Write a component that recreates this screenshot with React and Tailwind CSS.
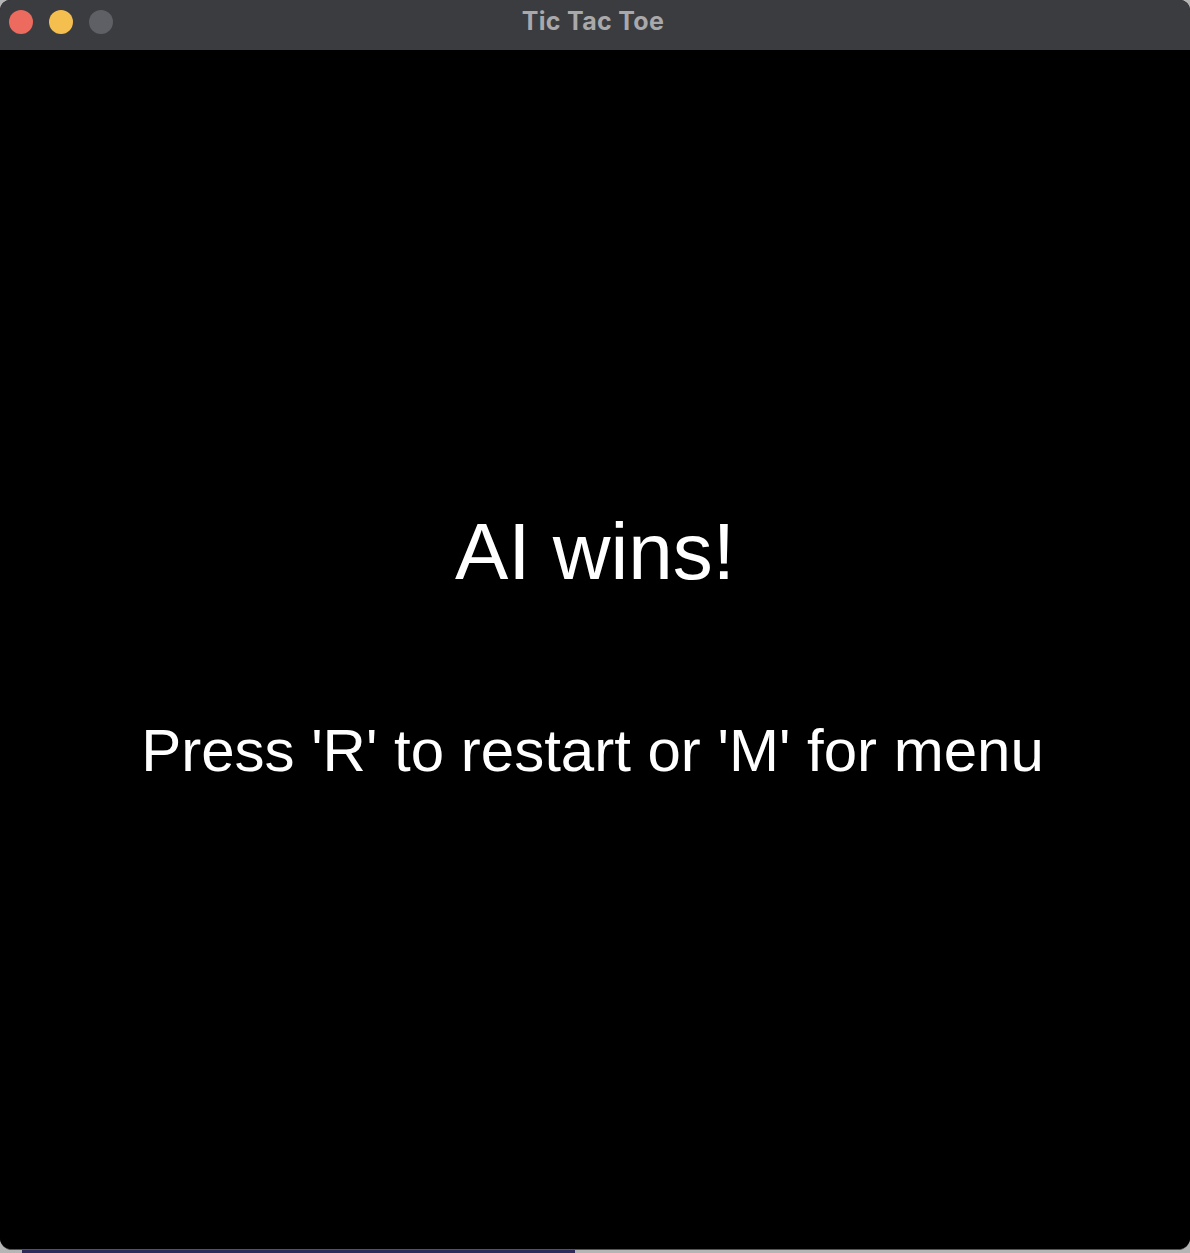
export default function App() {
  return (
    <div className="w-[1190px] h-[1253px] bg-[#b5b5b5] relative overflow-hidden" style={{ fontFamily: '"Liberation Sans", Arial, sans-serif' }}>
      <div className="absolute left-[22px] top-[1250px] w-[553px] h-[3px] bg-[#2e2a5a]" />
      <div className="w-[1190px] h-[1250px] rounded-t-[10px] rounded-b-[12px] overflow-hidden border-b border-[#555] flex flex-col bg-black relative">
        <div className="h-[50px] bg-[#3b3c40] flex items-start relative shrink-0">
          <div className="flex items-center gap-[16px] pl-[9px] pt-[10px]">
            <div className="w-[24px] h-[24px] rounded-full bg-[#ed6a5e]" />
            <div className="w-[24px] h-[24px] rounded-full bg-[#f5bf4f]" />
            <div className="w-[24px] h-[24px] rounded-full bg-[#5f6065]" />
          </div>
          <div className="absolute inset-x-0 top-0 h-[43px] flex items-center justify-center">
            <span className="text-[25px] font-bold text-[#a9a9ab] tracking-[0.3px] pr-[4px]" style={{ fontFamily: 'Inter, "Liberation Sans", sans-serif' }}>Tic Tac Toe</span>
          </div>
        </div>
        <div className="flex-1 bg-black flex flex-col items-center">
          <div className="h-[456px]" />
          <div className="text-[80px] leading-[92px] text-white">AI wins!</div>
          <div className="h-[118px]" />
          <div className="text-[60px] leading-[70px] text-white pr-[5px]">Press 'R' to restart or 'M' for menu</div>
        </div>
      </div>
    </div>
  );
}
